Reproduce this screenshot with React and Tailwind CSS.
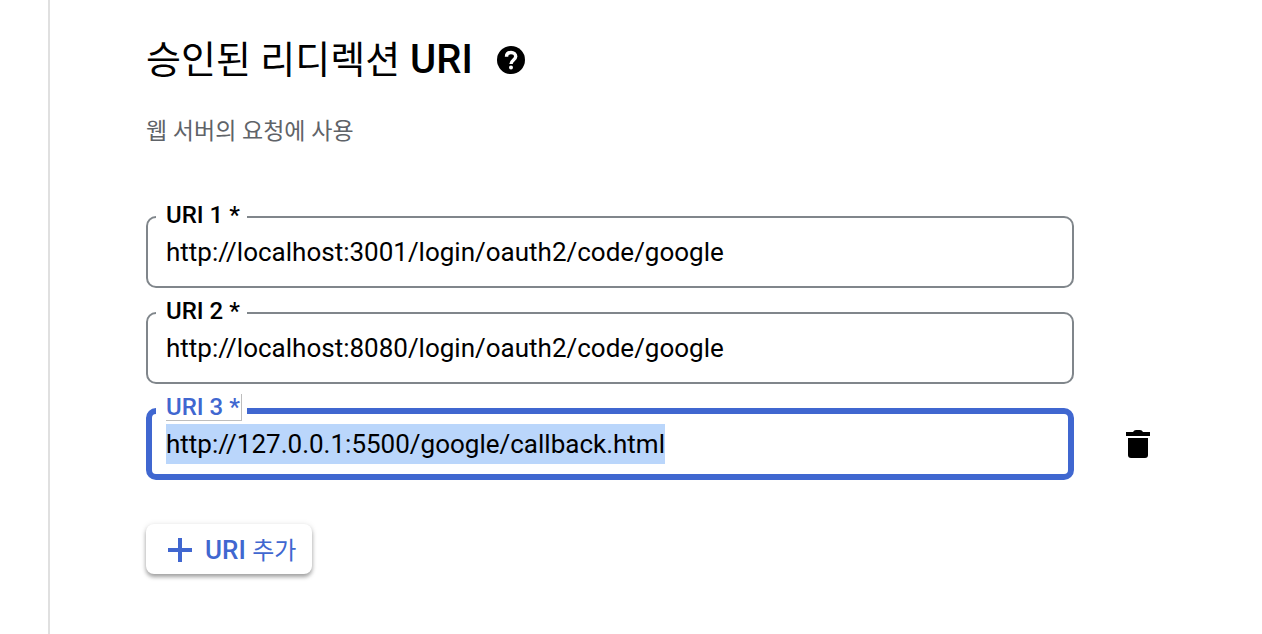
import { useEffect, useRef, useState } from "react";

const INITIAL_URIS = [
  "http://localhost:3001/login/oauth2/code/google",
  "http://localhost:8080/login/oauth2/code/google",
  "http://127.0.0.1:5500/google/callback.html",
];

const UriField = ({ index, value, active, onChange, onFocus, onDelete }) => {
  const inputRef = useRef(null);
  const id = `uri-${index + 1}`;

  useEffect(() => {
    if (active) inputRef.current.select();
  }, [active]);

  return (
    <div className="flex items-center gap-10">
      <div
        className={`relative flex-1 h-[72px] rounded-[10px] ${
          active
            ? "border-6 border-[#4067d0] px-[14px] pt-[10px]"
            : "border-2 border-[#80868b] px-[18px] pt-[14px]"
        }`}
      >
        {/* the label sits in a gap of the outline */}
        <label
          htmlFor={id}
          className={`absolute bg-white pl-[10px] text-[24px] leading-[26px] font-medium ${
            active
              ? "-top-5 left-1 pr-[5px] text-[#4067d0]"
              : "-top-4 left-2 pr-[6px] text-black"
          }`}
        >
          <span
            className={`block pr-px ${
              active ? "border-r border-b border-[#bdbdbd]" : ""
            }`}
          >
            URI {index + 1} *
          </span>
        </label>
        <input
          ref={inputRef}
          id={id}
          type="text"
          required
          spellCheck={false}
          value={value}
          onChange={onChange}
          onFocus={onFocus}
          className="block w-full h-10 leading-10 text-[26px] text-black outline-none selection:bg-[#bad6fb] selection:text-black"
        />
      </div>
      <div className="w-12">
        {active && (
          <button
            type="button"
            aria-label="URI 삭제"
            onClick={onDelete}
            className="flex h-12 w-12 items-center justify-center text-black"
          >
            <svg viewBox="0 0 24 28" className="h-7 w-6" fill="currentColor">
              <path d="M0 2h7q1-2 3-2h4q2 0 3 2h7v4H0z" />
              <path d="M2 8h20v17a3 3 0 0 1-3 3H5a3 3 0 0 1-3-3z" />
            </svg>
          </button>
        )}
      </div>
    </div>
  );
};

const App = () => {
  const [uris, setUris] = useState(INITIAL_URIS);
  const [active, setActive] = useState(2);

  const handleChange = (i, value) =>
    setUris(uris.map((uri, n) => (n === i ? value : uri)));

  const handleDelete = (i) => {
    setUris(uris.filter((_, n) => n !== i));
    setActive(-1);
  };

  const handleAdd = () => {
    setUris([...uris, ""]);
    setActive(uris.length);
  };

  return (
    <div className="min-h-screen bg-white pl-12 font-[Roboto,'Noto_Sans_CJK_KR',sans-serif]">
      <main className="min-h-screen border-l-2 border-[#e0e0e0] pt-8 pl-24 pr-[100px]">
        <div className="flex items-center gap-6">
          <h2 className="text-[40px] leading-14 font-medium text-black">
            <span className="text-[38px] font-normal">승인된 리디렉션</span> URI
          </h2>
          <button type="button" aria-label="도움말" className="text-black">
            <svg viewBox="0 0 28 28" className="size-7">
              <circle cx="14" cy="14" r="14" fill="currentColor" />
              <path
                d="M9.500 10.800C9.500 8 11.300 6.500 14 6.500s4.700 1.600 4.700 4.100c0 3.200-4.700 3.600-4.700 7.400"
                fill="none"
                stroke="white"
                strokeWidth="3.400"
              />
              <circle cx="14" cy="21.500" r="2" fill="white" />
            </svg>
          </button>
        </div>
        <p className="mt-7 text-[23px] leading-8 text-[#5f6368]">
          웹 서버의 요청에 사용
        </p>

        <form className="mt-17" onSubmit={(e) => e.preventDefault()}>
          <div className="flex flex-col gap-6">
            {uris.map((uri, i) => (
              <UriField
                key={i}
                index={i}
                value={uri}
                active={active === i}
                onChange={(e) => handleChange(i, e.target.value)}
                onFocus={() => setActive(i)}
                onDelete={() => handleDelete(i)}
              />
            ))}
          </div>

          <button
            type="button"
            onClick={handleAdd}
            className="mt-11 flex h-[50px] items-center gap-[13px] rounded-lg bg-white pt-0.5 pl-[22px] pr-4 text-[26px] leading-10 font-medium text-[#4067d0] shadow-[0_3px_4px_rgba(0,0,0,0.35),0_0_6px_rgba(0,0,0,0.08)]"
          >
            <svg viewBox="0 0 24 24" className="size-6" fill="currentColor">
              <path d="M10 0h4v10h10v4H14v10h-4V14H0v-4h10z" />
            </svg>
            <span>
              URI <span className="text-[24px] font-normal">추가</span>
            </span>
          </button>
        </form>
      </main>
    </div>
  );
};

export default App;
